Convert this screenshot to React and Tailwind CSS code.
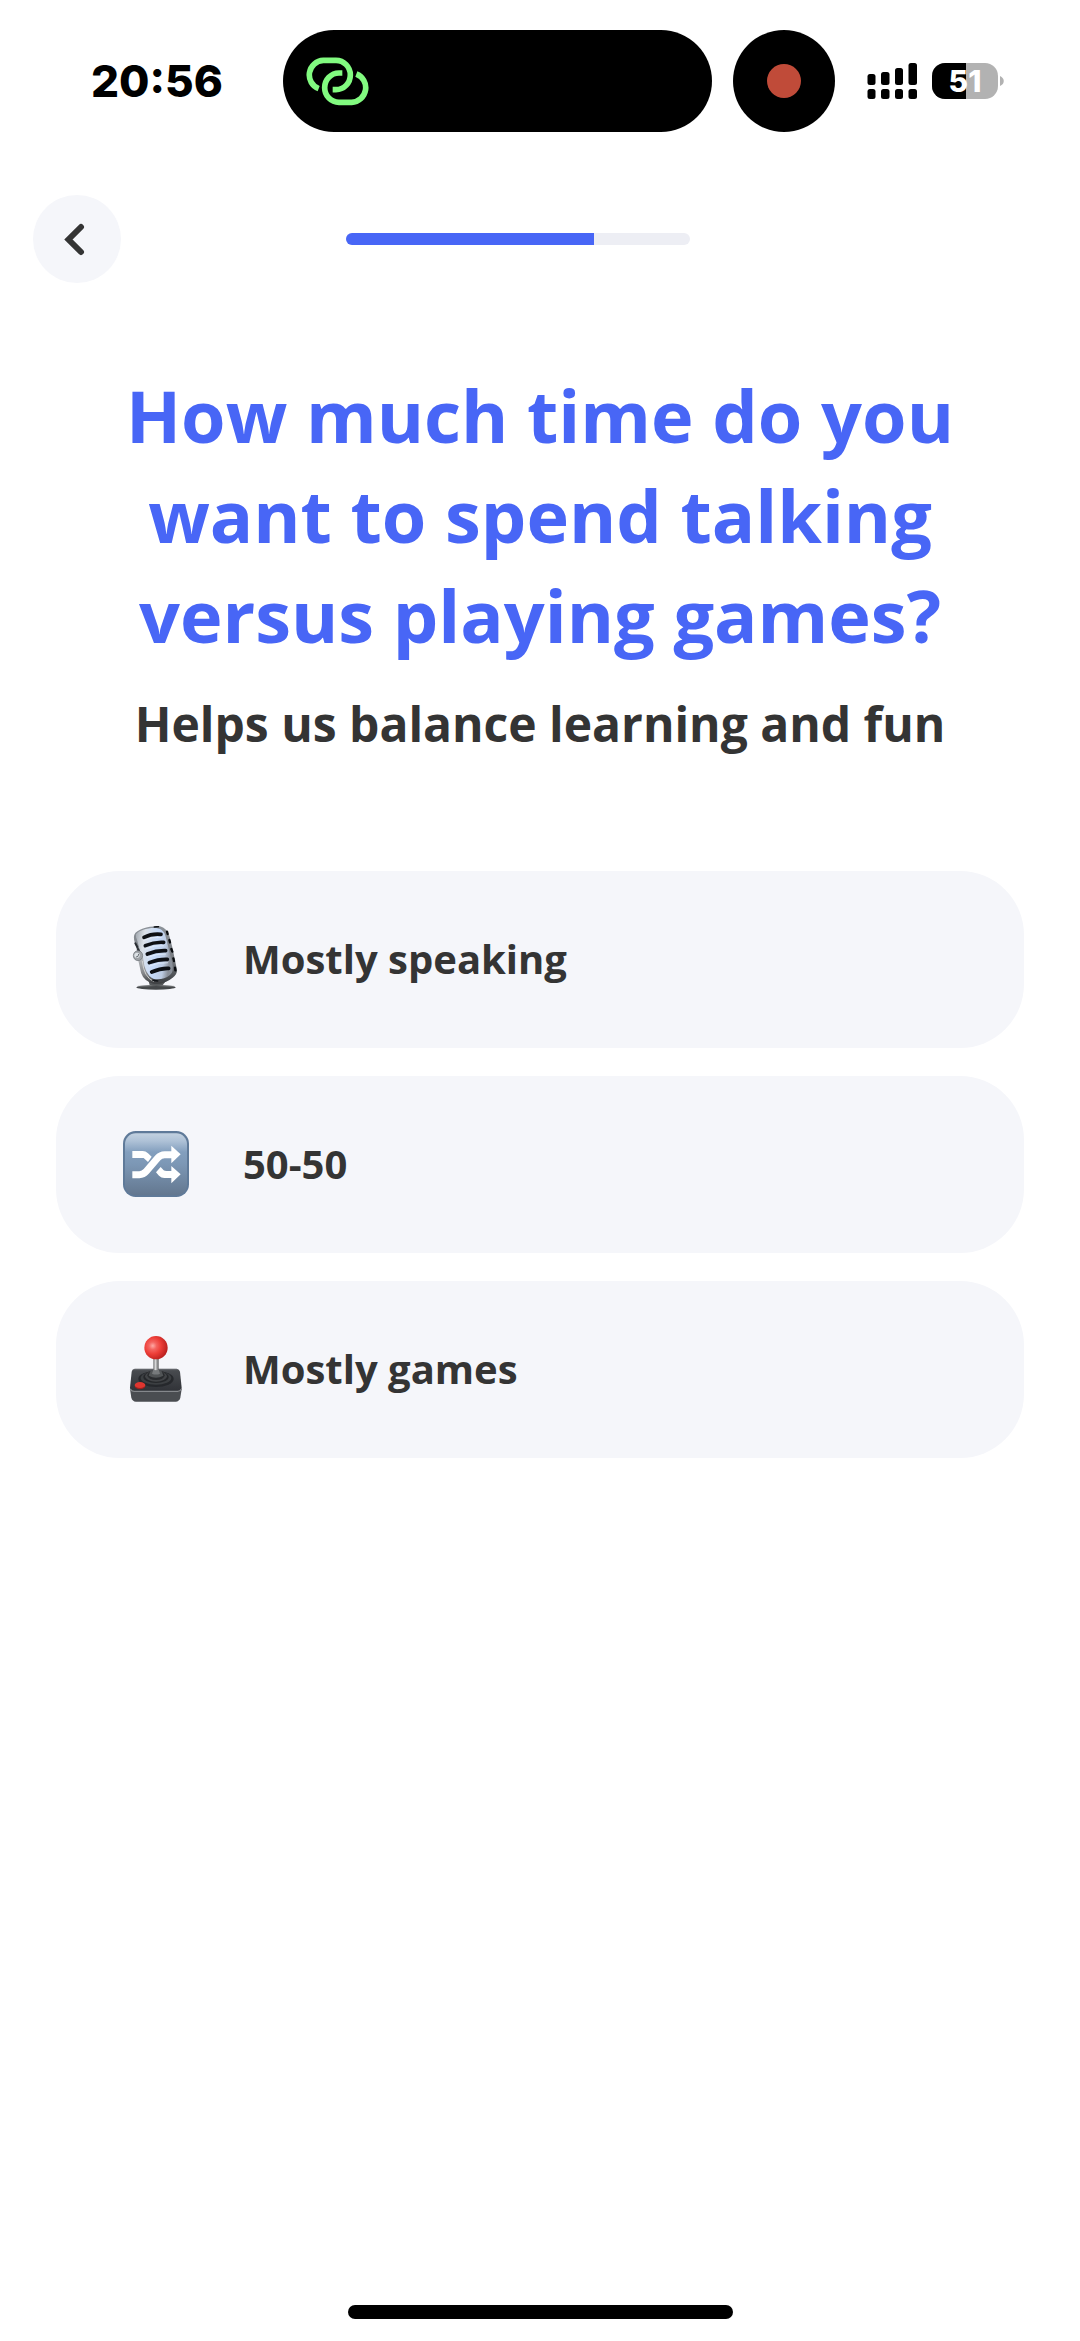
import React, { useState } from "react";

function LinkIcon() {
  return (
    <svg viewBox="48 50 189 147" className="w-[63px] h-[49px]" fill="none" stroke="#82fb80" strokeWidth="17">
      <path d="M86 145 A44 44 0 0 1 100 60 H138 A43 44 0 0 1 138 148 H128" />
      <path d="M199 101 A44 44 0 0 1 185 186 H147 A43 44 0 0 1 147 98 H157" />
    </svg>
  );
}

function SignalIcon() {
  return (
    <svg viewBox="0 0 50 36" className="w-[50px] h-9" fill="#000">
      <rect x="0.5" y="11" width="8" height="11" rx="2.5" />
      <rect x="14" y="9" width="8.5" height="13" rx="2.5" />
      <rect x="28" y="5" width="8" height="17" rx="2.5" />
      <rect x="41.5" y="0" width="8.5" height="22" rx="2.5" />
      <rect x="0.5" y="26" width="8" height="10" rx="2.5" />
      <rect x="14" y="26" width="8.5" height="10" rx="2.5" />
      <rect x="28" y="26" width="8" height="10" rx="2.5" />
      <rect x="41.5" y="26" width="8.5" height="10" rx="2.5" />
    </svg>
  );
}

function Battery({ level }) {
  return (
    <div className="flex items-center gap-[2px]">
      <div className="relative w-[66px] h-9 rounded-[13px] overflow-hidden bg-[#b2b2b2] flex items-center justify-center">
        <div className="absolute inset-y-0 left-0 bg-black" style={{ width: `${level}%` }} />
        <span className="relative text-white text-[30px] leading-9 font-extrabold">{level}</span>
      </div>
      <svg viewBox="0 0 4 10" className="w-1 h-[10px]" fill="#b2b2b2">
        <path d="M0 0 C5 2 5 8 0 10 Z" />
      </svg>
    </div>
  );
}

function StatusBar() {
  return (
    <div className="flex items-center pt-[30px] pl-[91px] pr-[76px]">
      <div className="w-48 text-[44px] leading-[60px] font-extrabold text-black">20:56</div>
      <div className="flex-1 h-[102px] rounded-full bg-black flex items-center pl-[23px]">
        <LinkIcon />
      </div>
      <div className="ml-[21px] size-[102px] rounded-full bg-black flex items-center justify-center">
        <div className="size-[34px] rounded-full bg-[#c04b39]" />
      </div>
      <div className="ml-8 flex items-center gap-[15px]">
        <SignalIcon />
        <Battery level={51} />
      </div>
    </div>
  );
}

function MicIcon() {
  return (
    <svg viewBox="39 48 198 198" className="size-[66px]">
      <defs>
        <linearGradient id="micBody" x1="0" y1="0" x2="1" y2="0.2">
          <stop offset="0" stopColor="#9fa5ac" />
          <stop offset="0.25" stopColor="#dbe1e8" />
          <stop offset="0.6" stopColor="#c5dafa" />
          <stop offset="0.85" stopColor="#bccbe2" />
          <stop offset="1" stopColor="#8a909a" />
        </linearGradient>
        <linearGradient id="micShell" x1="0" y1="0" x2="0" y2="1">
          <stop offset="0" stopColor="#8c9299" />
          <stop offset="0.6" stopColor="#777b80" />
          <stop offset="1" stopColor="#3c3f43" />
        </linearGradient>
        <linearGradient id="micStand" x1="0" y1="0" x2="0" y2="1">
          <stop offset="0" stopColor="#b9bcc0" />
          <stop offset="0.6" stopColor="#85878a" />
          <stop offset="1" stopColor="#37393b" />
        </linearGradient>
      </defs>
      <ellipse cx="138" cy="232" rx="59" ry="7" fill="#45484a" />
      <path d="M84 229 Q138 224 192 229" fill="none" stroke="#8b8e90" strokeWidth="2" />
      <path d="M115 210 L168 212 L158 226 Q137 230 119 225 Z" fill="#55585a" />
      <path d="M73 74 C80 56 124 46 150 49 Q170 55 178 77 L187 112 L201 180 Q202 192 188 203 C162 226 124 222 107 201 Q92 184 89 151 L74 96 Q70 83 73 74 Z" fill="url(#micShell)" />
      <path d="M78 73 C88 57 138 48 154 59 Q165 66 168 84 L187 160 Q192 186 180 195 C159 212 129 212 114 197 Q102 184 99 157 L82 93 Q76 80 78 73 Z" fill="url(#micBody)" />
      <path d="M76 100 L82 111 M84 117 L88 125" stroke="#292d32" strokeWidth="6" strokeLinecap="round" />
      <g fill="none" stroke="#0d1015" strokeWidth="11" strokeLinecap="round">
        <path d="M102 82 Q126 70 153 73" />
        <path d="M106 107 Q134 95 161 97" />
        <path d="M112 132 Q140 121 167 122" />
        <path d="M118 158 Q146 147 172 148" />
        <path d="M125 186 Q151 174 176 175" />
      </g>
      <g fill="none" stroke="#e9f1ff" strokeWidth="2" strokeLinecap="round">
        <path d="M101 91 Q127 79 154 82" />
        <path d="M106 117 Q134 104 161 107" />
        <path d="M112 142 Q140 130 167 132" />
        <path d="M118 168 Q147 156 173 158" />
      </g>
      <path d="M83 143 L99 142 L103 167 Q112 204 144 213 L166 216 Q145 226 121 218 Q94 208 90 174 Z" fill="url(#micStand)" />
      <path d="M97 153 Q101 201 132 215" fill="none" stroke="#d2d3d2" strokeWidth="3" />
      <ellipse cx="84" cy="137" rx="14" ry="15" fill="#9da1a5" stroke="#6a6f75" strokeWidth="2" />
      <circle cx="81" cy="136" r="8" fill="#dde2e6" />
      <path d="M78 141 Q86 142 86 132" fill="none" stroke="#6c7278" strokeWidth="3" />
      <path d="M171 65 L173 72 M178 90 L180 97 M184 117 L187 125 M190 145 L192 153 M195 173 L196 181" stroke="#080b0f" strokeWidth="7" strokeLinecap="round" />
      <path d="M133 51 L145 50 M129 211 L143 213" stroke="#111418" strokeWidth="5" strokeLinecap="round" />
    </svg>
  );
}

function ShuffleIcon() {
  return (
    <svg viewBox="39 30 198 198" className="size-[66px]">
      <defs>
        <linearGradient id="tile" x1="0" y1="0" x2="0" y2="1">
          <stop offset="0" stopColor="#c2d1e0" />
          <stop offset="0.12" stopColor="#afc2d7" />
          <stop offset="0.3" stopColor="#839fbe" />
          <stop offset="0.5" stopColor="#7c97b5" />
          <stop offset="1" stopColor="#63778f" />
        </linearGradient>
      </defs>
      <rect x="39" y="30" width="198" height="198" rx="38" fill="#5f7a99" />
      <rect x="45" y="37" width="186" height="186" rx="32" fill="url(#tile)" />
      <path d="M67 161 H88 C98 161 103 158 109 151 L143 111 C150 103 154 101 164 101 H186" fill="none" stroke="#fff" strokeWidth="21" />
      <path d="M67 90 H98 Q107 90 114 97 L125 107 L114 123 L101 111 H67 Z" fill="#fff" />
      <path d="M152 138 L161 148 Q164 150 170 150 H184 V135 L212 160 L184 187 V171 H163 Q154 171 147 164 L138 154 Z" fill="#fff" />
      <path d="M184 74 L212 100 L184 127 Z" fill="#fff" />
    </svg>
  );
}

function JoystickIcon() {
  return (
    <svg viewBox="39 28 198 198" className="size-[66px]">
      <defs>
        <radialGradient id="ball" cx="0.36" cy="0.42" r="0.65">
          <stop offset="0" stopColor="#ffaaa5" />
          <stop offset="0.25" stopColor="#f46460" />
          <stop offset="0.55" stopColor="#ed3e38" />
          <stop offset="1" stopColor="#b91f1d" />
        </radialGradient>
        <linearGradient id="stick" x1="0" y1="0" x2="1" y2="0">
          <stop offset="0" stopColor="#707274" />
          <stop offset="0.4" stopColor="#d7d8d9" />
          <stop offset="1" stopColor="#5c5e60" />
        </linearGradient>
        <linearGradient id="base" x1="0" y1="0" x2="0" y2="1">
          <stop offset="0" stopColor="#4a4d51" />
          <stop offset="1" stopColor="#303237" />
        </linearGradient>
      </defs>
      <path d="M60 187 L64 213 Q67 224 78 225 H197 Q208 224 211 213 L215 187 Z" fill="#4a4d51" />
      <path d="M74 126 H200 Q208 127 210 135 L215 183 Q215 193 204 194 H71 Q60 193 60 183 L65 135 Q66 127 74 126 Z" fill="url(#base)" />
      <path d="M61 187 Q64 194 73 194 H203 Q211 194 214 187" fill="none" stroke="#85888c" strokeWidth="4" />
      <path d="M71 129 H203" stroke="#74777b" strokeWidth="2" />
      <ellipse cx="138" cy="157" rx="53" ry="24" fill="#26282c" />
      <ellipse cx="138" cy="154" rx="46" ry="20" fill="#3c3f42" />
      <ellipse cx="138" cy="151" rx="38" ry="18" fill="#25272a" />
      <ellipse cx="138" cy="149" rx="33" ry="16" fill="#424447" />
      <ellipse cx="138" cy="146" rx="26" ry="14" fill="#292b2e" />
      <path d="M121 134 Q138 124 155 134 L160 147 Q138 159 116 147 Z" fill="#515456" />
      <rect x="130" y="95" width="16" height="37" fill="url(#stick)" />
      <path d="M130 129 Q138 133 146 129 L150 141 Q138 146 126 141 Z" fill="#777a7c" />
      <circle cx="138" cy="63" r="35" fill="url(#ball)" />
      <ellipse cx="90" cy="178" rx="16" ry="10" fill="#9d211e" />
      <ellipse cx="90" cy="175" rx="16" ry="9" fill="#df3630" />
    </svg>
  );
}

const options = [
  { id: "speaking", label: "Mostly speaking", Icon: MicIcon },
  { id: "even", label: "50-50", Icon: ShuffleIcon },
  { id: "games", label: "Mostly games", Icon: JoystickIcon },
];

export default function App() {
  const [selected, setSelected] = useState(null);

  return (
    <div className="min-h-screen flex flex-col bg-white text-[#343434] font-['Inter',sans-serif]">
      <StatusBar />

      <header className="flex items-center pt-[63px] pl-[33px] pr-[165px]">
        <button type="button" aria-label="Back" className="size-[88px] rounded-full bg-[#f5f6fa]">
          <svg viewBox="0 0 88 88" className="size-full" fill="none" stroke="#343434" strokeWidth="6" strokeLinecap="round" strokeLinejoin="miter">
            <path d="M48 32 L35.5 44.5 L48 57" />
          </svg>
        </button>
        <div className="flex-1 flex justify-center">
          <div
            role="progressbar"
            aria-label="Progress"
            aria-valuenow={72}
            className="w-[344px] h-3 rounded-full overflow-hidden bg-[#edeef4]"
          >
            <div className="h-full bg-[#4866f6]" style={{ width: "72%" }} />
          </div>
        </div>
      </header>

      <main className="flex-1 px-14 pt-[82px] font-['Open_Sans',sans-serif]">
        <h1 className="max-w-[900px] mx-auto text-center text-[72px] leading-[100px] font-bold text-[#4866f6]">
          How much time do you want to spend talking versus playing games?
        </h1>
        <p className="mt-6 text-center text-[48px] leading-[70px] font-bold">
          Helps us balance learning and fun
        </p>

        <div className="mt-[112px] flex flex-col gap-7">
          {options.map(({ id, label, Icon }) => (
            <button
              key={id}
              type="button"
              aria-pressed={selected === id}
              onClick={() => setSelected(id)}
              className="h-[177px] px-[67px] pb-[2px] flex items-center gap-[54px] rounded-[64px] bg-[#f5f6fa] text-left text-[40px] leading-[52px] font-bold"
            >
              <Icon />
              <span>{label}</span>
            </button>
          ))}
        </div>
      </main>

      <div className="mx-auto mb-[22px] w-[385px] h-[14px] rounded-full bg-black" />
    </div>
  );
}
